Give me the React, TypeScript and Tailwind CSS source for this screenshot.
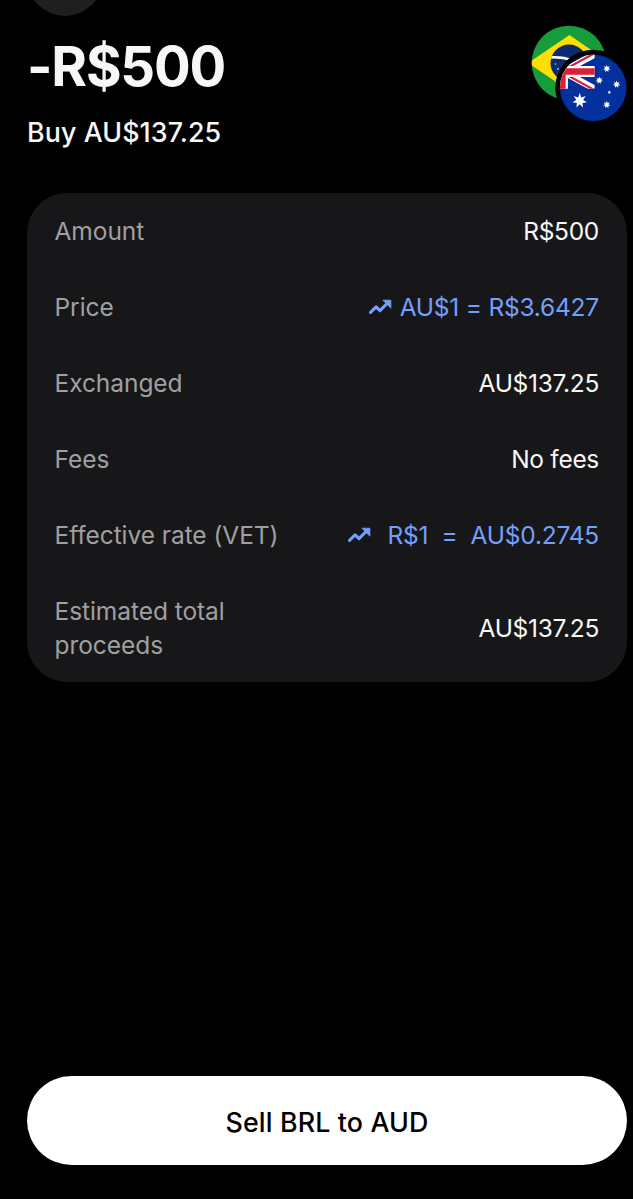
import React from "react";

type DetailRow = {
  label: string;
  value: string;
  isLink?: boolean;
  wide?: boolean;
};

const rows: DetailRow[] = [
  { label: "Amount", value: "R$500" },
  { label: "Price", value: "AU$1 = R$3.6427", isLink: true },
  { label: "Exchanged", value: "AU$137.25" },
  { label: "Fees", value: "No fees" },
  {
    label: "Effective rate (VET)",
    value: "R$1 = AU$0.2745",
    isLink: true,
    wide: true,
  },
  { label: "Estimated total proceeds", value: "AU$137.25" },
];

// 7-pointed star, centered on 0,0 with radius 1
const STAR =
  "M0-1 .2-.42 .78-.62 .45-.1 .97 .22 .37 .29 .43 .9 0 .47-.43 .9-.37 .29-.97 .22-.45-.1-.78-.62-.2-.42Z";

const stars = [
  { x: 48.7, y: 75.7, r: 7.6 },
  { x: 75.8, y: 43.7, r: 3.9 },
  { x: 68.3, y: 55.3, r: 3.9 },
  { x: 85.6, y: 59.3, r: 3.9 },
  { x: 78.3, y: 67.3, r: 1.9 },
  { x: 75.8, y: 79.7, r: 3.9 },
];

const TrendIcon: React.FC = () => (
  <svg width="24" height="24" viewBox="0 0 24 24" fill="none">
    <path
      d="M2.5 17.3 8.1 11.9 12 15.6 18.6 9"
      stroke="currentColor"
      strokeWidth="3.1"
      strokeLinecap="round"
      strokeLinejoin="round"
    />
    <path
      d="M14.9 5.2H22.9V13.2Z"
      fill="currentColor"
      stroke="currentColor"
      strokeWidth=".8"
      strokeLinejoin="round"
    />
  </svg>
);

const CurrencyPair: React.FC = () => (
  <svg width="96" height="97" viewBox="0 0 96 97">
    <defs>
      <clipPath id="brl">
        <circle cx="38" cy="38" r="37.3" />
      </clipPath>
      <clipPath id="brl-globe">
        <circle cx="38" cy="38" r="18.5" />
      </clipPath>
      <clipPath id="aud">
        <circle cx="62.2" cy="62.7" r="33.3" />
      </clipPath>
      <clipPath id="canton">
        <rect x="0" y="29.4" width="63.6" height="34.3" />
      </clipPath>
    </defs>

    <g clipPath="url(#brl)">
      <rect width="76" height="76" fill="#179c3b" />
      <path d="M-3 38 38.5 10 79 38 38.5 66Z" fill="#fedf00" />
      <circle cx="38" cy="38" r="18.5" fill="#0d2a70" />
      <g clipPath="url(#brl-globe)">
        <path d="M18 32.5Q38 30.5 58 43" stroke="#fff" strokeWidth="2.6" fill="none" />
        <g fill="#b9c6e0">
          <circle cx="24.5" cy="39" r=".8" />
          <circle cx="27" cy="44" r=".9" />
          <circle cx="31" cy="42" r=".6" />
        </g>
      </g>
    </g>

    <circle cx="62.2" cy="62.7" r="38" fill="#000" />
    <g clipPath="url(#aud)">
      <rect x="28" y="28" width="68" height="70" fill="#02309c" />
      <g clipPath="url(#canton)">
        <path d="M0 29.4 63.6 63.7M0 63.7 63.6 29.4" stroke="#fff" strokeWidth="6.6" />
        <path d="M32 47.8 62.6 64.6M32 45.4 64.6 27.6" stroke="#d92036" strokeWidth="2.2" />
        <path d="M31.4 28V64M0 46.6H64" stroke="#fff" strokeWidth="11" />
        <path d="M31.4 28V64M0 46.6H64" stroke="#d92036" strokeWidth="6.5" />
      </g>
      {stars.map(({ x, y, r }) => (
        <path
          key={`${x}-${y}`}
          d={STAR}
          transform={`translate(${x} ${y}) scale(${r})`}
          fill="#fff"
        />
      ))}
    </g>
  </svg>
);

const App: React.FC = () => {
  return (
    <main className="flex h-[1199px] w-[633px] flex-col overflow-hidden bg-black pr-1.5 pl-[27px] font-['Inter',sans-serif] text-[#f7f7f7]">
      {/* Back button, mostly scrolled off the top */}
      <div className="-mt-[60px] h-[76px] w-[76px] shrink-0 rounded-full bg-[#1f1f1f]" />

      <header className="mt-[9px] flex h-[168px] shrink-0 justify-between">
        <div>
          <h1 className="mt-[9px] text-[54.5px] leading-[64px] font-bold tracking-[-1.2px]">
            -R$500
          </h1>
          <p className="mt-[17px] text-[26.8px] leading-[34px] font-medium tracking-[0.1px]">
            Buy AU$137.25
          </p>
        </div>
        <CurrencyPair />
      </header>

      <section className="h-[489px] shrink-0 rounded-[40px] bg-[#17171a] pr-7 pl-[27.5px] text-[24.5px] leading-[34px]">
        {rows.map(({ label, value, isLink, wide }) => (
          <div key={label} className="flex items-center justify-between py-[21px]">
            <span className="max-w-[230px] tracking-[-0.06px] text-[#a0a0a1]">
              {label}
            </span>
            {isLink ? (
              <a
                href="#"
                className={`flex items-center tracking-[-0.22px] text-[#749ffa] ${wide ? "gap-4 [word-spacing:6.5px]" : "gap-2"}`}
              >
                <TrendIcon />
                {value}
              </a>
            ) : (
              <span className="tracking-[-0.3px]">{value}</span>
            )}
          </div>
        ))}
      </section>

      <button className="mt-auto mb-[34px] h-[89px] shrink-0 rounded-full bg-white pt-[3px] text-[26.8px] font-medium tracking-[0.15px] text-black">
        Sell BRL to AUD
      </button>
    </main>
  );
};

export default App;
